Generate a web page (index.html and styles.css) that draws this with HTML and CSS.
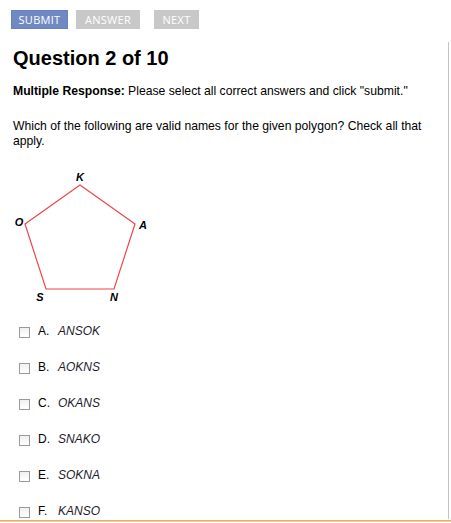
FILE: index.html
```html
<!DOCTYPE html>
<html lang="en">
  <head>
    <meta name="viewport" content="width=device-width" />
    <title>Question 2 of 10</title>
    <link rel="stylesheet" href="styles.css">
  </head>
  <body>
    <div class="toolbar">
      <button class="btn btn-submit">SUBMIT</button>
      <button class="btn btn-answer">ANSWER</button>
      <button class="btn btn-next">NEXT</button>
    </div>
    <main class="panel">
      <h1>Question 2 of 10</h1>
      <p class="instructions"><b>Multiple Response:</b> Please select all correct answers and click "submit."</p>
      <p class="prompt">Which of the following are valid names for the given polygon? Check all that apply.</p>
      <svg class="figure" width="150" height="135" viewBox="0 0 150 135">
        <polygon points="67,17 122,56 101,121 33,121 12,56" fill="none" stroke="#f0444a" stroke-width="1.2" />
        <g class="labels">
          <text x="67" y="9">K</text>
          <text x="6" y="54">O</text>
          <text x="130" y="57">A</text>
          <text x="27" y="129">S</text>
          <text x="101" y="129">N</text>
        </g>
      </svg>
      <ul class="choices">
        <li><span class="box"></span><span class="letter">A.</span><i>ANSOK</i></li>
        <li><span class="box"></span><span class="letter">B.</span><i>AOKNS</i></li>
        <li><span class="box"></span><span class="letter">C.</span><i>OKANS</i></li>
        <li><span class="box"></span><span class="letter">D.</span><i>SNAKO</i></li>
        <li><span class="box"></span><span class="letter">E.</span><i>SOKNA</i></li>
        <li><span class="box"></span><span class="letter">F.</span><i>KANSO</i></li>
      </ul>
    </main>
    <div class="statusbar"></div>
  </body>
</html>
```

FILE: styles.css
```css
body {
  margin: 0;
  background: #fff;
  font-family: "Liberation Sans", Arial, sans-serif;
  color: #000;
}

/* top button bar */
.toolbar {
  display: flex;
  height: 42px;
  box-sizing: border-box;
  padding: 10px 0 0 11px;
}

.btn {
  height: 19px;
  padding: 0;
  border: none;
  color: #fff;
  font: 11px/19px "Open Sans", "DejaVu Sans", sans-serif;
  letter-spacing: 0.3px;
  text-align: center;
}

.btn-submit {
  width: 57px;
  background: #7189c3;
  box-shadow: inset 0 0 0 1px #6a82bc;
}

.btn-answer {
  width: 64px;
  margin-left: 8px;
  background: #c8c8c8;
}

.btn-next {
  width: 45px;
  margin-left: 14px;
  background: #c8c8c8;
}

/* question area, scrolled so the last row is cut */
.panel {
  width: 449px;
  height: 477px;
  box-sizing: border-box;
  padding: 0 13px;
  border-right: 1px solid #c4c4c4;
  overflow: hidden;
}

h1 {
  margin: 4px 0 0;
  font-size: 20px;
  line-height: 24px;
}

.instructions,
.prompt {
  margin: 0;
  font-size: 12.2px;
  line-height: 15px;
}

.instructions {
  margin-top: 14px;
}

.prompt {
  margin-top: 20px;
}

.figure {
  display: block;
  margin-top: 19px;
}

.labels text {
  font: italic bold 11px "Liberation Sans", Arial, sans-serif;
  text-anchor: middle;
  dominant-baseline: central;
}

.choices {
  list-style: none;
  margin: 10px 0 0;
  padding: 0;
}

.choices li {
  display: flex;
  align-items: center;
  height: 36px;
  font-size: 12px;
}

.box {
  width: 9px;
  height: 9px;
  margin: 2px 8px 0 6px;
  border: 1px solid #9a9a9a;
  background: linear-gradient(#f0f0f0, #fff);
}

.letter {
  width: 20px;
}

.choices i {
  color: #1c1c2c;
}

.statusbar {
  height: 1px;
  margin-top: 1px;
  border-top: 1px solid #f0b43c;
  background: #d4d4d4;
}
```
